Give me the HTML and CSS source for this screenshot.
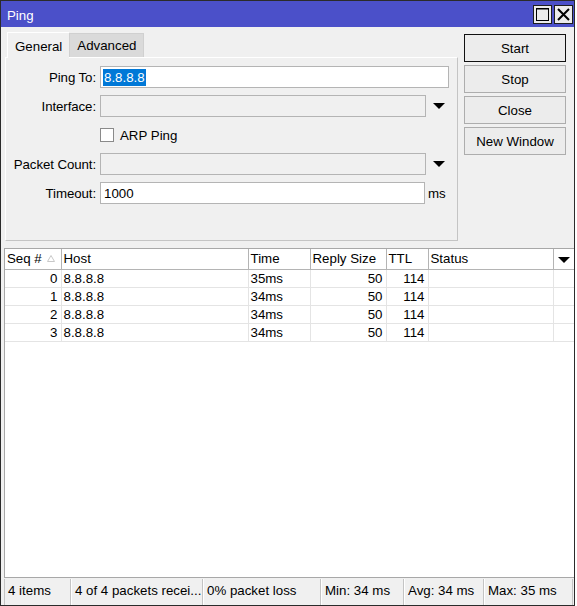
FILE: index.html
```html
<!DOCTYPE html>
<html>
<head>
<meta charset="utf-8">
<title>Ping</title>
<link rel="stylesheet" href="styles.css">
</head>
<body>
<div class="window">
  <div class="titlebar">
    <span class="title">Ping</span>
    <div class="tb-buttons">
      <span class="tb-btn">
        <svg width="17" height="17" viewBox="0 0 17 17"><rect x="2.5" y="2.5" width="12" height="12" fill="none" stroke="#000" stroke-width="1"/><line x1="2.5" y1="3" x2="14.5" y2="3" stroke="#000" stroke-width="1"/></svg>
      </span>
      <span class="tb-btn">
        <svg width="17" height="17" viewBox="0 0 17 17"><path d="M3 3 L14 14 M14 3 L3 14" stroke="#000" stroke-width="2" fill="none"/></svg>
      </span>
    </div>
  </div>

  <div class="top">
    <div class="tabarea">
      <div class="tabs">
        <div class="tab active">General</div>
        <div class="tab">Advanced</div>
      </div>
      <div class="panel">
        <div class="row">
          <span class="lbl">Ping To:</span>
          <div class="field white w-ping"><span class="sel">8.8.8.8</span></div>
        </div>
        <div class="row">
          <span class="lbl">Interface:</span>
          <div class="field gray w-combo"></div>
          <svg class="drop" width="12" height="6" viewBox="0 0 12 6"><path d="M0 0 H12 L6 6 Z" fill="#000"/></svg>
        </div>
        <div class="row">
          <span class="lbl"></span>
          <span class="checkbox"></span>
          <span class="chk-lbl">ARP Ping</span>
        </div>
        <div class="row">
          <span class="lbl">Packet Count:</span>
          <div class="field gray w-combo"></div>
          <svg class="drop" width="12" height="6" viewBox="0 0 12 6"><path d="M0 0 H12 L6 6 Z" fill="#000"/></svg>
        </div>
        <div class="row">
          <span class="lbl">Timeout:</span>
          <div class="field white w-time"><span class="val">1000</span></div>
          <span class="unit">ms</span>
        </div>
      </div>
    </div>
    <div class="buttons">
      <div class="btn default">Start</div>
      <div class="btn">Stop</div>
      <div class="btn">Close</div>
      <div class="btn">New Window</div>
    </div>
  </div>

  <div class="table-wrap">
    <table class="grid">
      <colgroup>
        <col class="c-seq"><col class="c-host"><col class="c-time"><col class="c-size"><col class="c-ttl"><col class="c-status"><col class="c-menu">
      </colgroup>
      <thead>
        <tr>
          <th>Seq #<svg class="sort" width="8" height="7" viewBox="0 0 8 7"><path d="M4 0.5 L7.5 6.5 H0.5 Z" fill="none" stroke="#c8c8c8" stroke-width="1"/></svg></th>
          <th>Host</th>
          <th>Time</th>
          <th>Reply Size</th>
          <th>TTL</th>
          <th>Status</th>
          <th class="menu"><svg width="12" height="6" viewBox="0 0 12 6"><path d="M0 0 H12 L6 6 Z" fill="#000"/></svg></th>
        </tr>
      </thead>
      <tbody>
        <tr><td class="r">0</td><td>8.8.8.8</td><td>35ms</td><td class="r">50</td><td class="r">114</td><td></td><td></td></tr>
        <tr><td class="r">1</td><td>8.8.8.8</td><td>34ms</td><td class="r">50</td><td class="r">114</td><td></td><td></td></tr>
        <tr><td class="r">2</td><td>8.8.8.8</td><td>34ms</td><td class="r">50</td><td class="r">114</td><td></td><td></td></tr>
        <tr><td class="r">3</td><td>8.8.8.8</td><td>34ms</td><td class="r">50</td><td class="r">114</td><td></td><td></td></tr>
      </tbody>
    </table>
  </div>

  <div class="statusbar">
    <div class="cell s1">4 items</div>
    <div class="cell s2">4 of 4 packets recei...</div>
    <div class="cell s3">0% packet loss</div>
    <div class="cell s4">Min: 34 ms</div>
    <div class="cell s5">Avg: 34 ms</div>
    <div class="cell s6">Max: 35 ms</div>
  </div>
</div>
</body>
</html>
```

FILE: styles.css
```css
* { box-sizing: border-box; }

body {
  margin: 0;
  background: #ffffff;
  font-family: "Liberation Sans", Arial, sans-serif;
  font-size: 13.3px;
  color: #000;
}

.window {
  width: 575px;
  height: 606px;
  border: 1px solid #2b2b2b;
  background: #f0f0f0;
  display: flex;
  flex-direction: column;
}

/* title bar */
.titlebar {
  height: 26px;
  background: #4b50c9;
  color: #fff;
  display: flex;
  align-items: center;
  justify-content: space-between;
  padding: 0 1px 0 6px;
  flex: none;
}
.title { font-size: 13.3px; padding-top: 2px; }
.tb-buttons { display: flex; gap: 2px; }
.tb-btn {
  width: 19px;
  height: 19px;
  border: 1px solid #1e1e1e;
  background: #ececec;
  display: flex;
  align-items: center;
  justify-content: center;
}
.tb-btn svg { display: block; }

/* top section */
.top {
  height: 221px;
  flex: none;
  display: flex;
  padding: 4px 0 0 4px;
}
.tabarea { width: 453px; display: flex; flex-direction: column; }
.tabs { display: flex; height: 26px; padding-left: 2px; align-items: flex-end; }
.tab {
  height: 24px;
  padding: 0 7px;
  display: flex;
  align-items: center;
  border: 1px solid #d0d0d0;
  border-bottom: none;
  background: #dadada;
}
.tab.active {
  height: 26px;
  background: #f0f0f0;
  border-color: #ffffff;
  border-right: none;
  position: relative;
  z-index: 1;
  margin-bottom: -1px;
  padding-top: 2px;
}
.panel {
  height: 184px;
  border: 1px solid #c4c4c4;
  border-top-color: #ffffff;
  border-left-color: #ffffff;
  padding: 8px 0 0 0;
  display: flex;
  flex-direction: column;
  gap: 7px;
}
.row { display: flex; align-items: center; height: 22px; }
.lbl {
  width: 90px;
  margin-right: 4px;
  text-align: right;
  letter-spacing: -0.1px;
}
.field {
  height: 22px;
  border: 1px solid #b4b4b4;
  display: flex;
  align-items: center;
  padding-left: 2px;
}
.field.white { background: #fff; }
.field.gray { background: #f0f0f0; }
.w-ping { width: 349px; }
.w-combo { width: 326px; }
.w-time { width: 325px; }
.sel { background: #0078d7; color: #fff; padding: 1px 1px; }
.val { padding-left: 1px; }
.drop { margin-left: 7px; }
.unit { margin-left: 3px; }
.checkbox {
  width: 14px;
  height: 14px;
  border: 1px solid #8a8a8a;
  background: #fff;
}
.chk-lbl { margin-left: 6px; }

/* buttons */
.buttons {
  margin-left: 6px;
  margin-top: 3px;
  width: 102px;
  display: flex;
  flex-direction: column;
  gap: 3px;
}
.btn {
  height: 28px;
  border: 1px solid #adadad;
  background: #ececec;
  display: flex;
  align-items: center;
  justify-content: center;
}
.btn.default { border: 1px solid #111; }

/* table */
.table-wrap {
  flex: 1;
  margin-left: 3px;
  background: #fff;
  border-left: 1px solid #a8a8a8;
  border-top: 1px solid #a8a8a8;
  border-bottom: 1px solid #a8a8a8;
  overflow: hidden;
}
.grid {
  border-collapse: collapse;
  table-layout: fixed;
  width: 569px;
}
.c-seq { width: 56px; }
.c-host { width: 187px; }
.c-time { width: 62px; }
.c-size { width: 76px; }
.c-ttl { width: 42px; }
.c-status { width: 125px; }
.c-menu { width: 21px; }
.grid th {
  height: 20px;
  font-weight: normal;
  text-align: left;
  padding: 0 2px;
  border-right: 1px solid #b4b4b4;
  border-bottom: 1px solid #b4b4b4;
  white-space: nowrap;
}
.grid th.menu { border-right: none; text-align: center; padding: 0; }
.grid th svg { vertical-align: middle; }
.grid th .sort { margin-left: 5px; vertical-align: 1px; }
.grid td {
  height: 18px;
  padding: 0 3px 0 2px;
  border-right: 1px solid #e4e4e4;
  border-bottom: 1px solid #e4e4e4;
  white-space: nowrap;
}
.grid td:last-child { border-right: none; }
.grid td.r { text-align: right; }

/* status bar */
.statusbar {
  height: 27px;
  flex: none;
  display: flex;
  margin-left: 3px;
}
.cell {
  height: 26px;
  margin-top: 1px;
  border-left: 1px solid #ffffff;
  border-right: 1px solid #c4c4c4;
  padding: 0 0 3px 3px;
  display: flex;
  align-items: center;
  white-space: nowrap;
  overflow: hidden;
}
.s1 { width: 67px; border-left: 1px solid #c4c4c4; }
.s2 { width: 132px; }
.s3 { width: 118px; }
.s4 { width: 83px; }
.s5 { width: 80px; }
.s6 { width: 89px; }
```
